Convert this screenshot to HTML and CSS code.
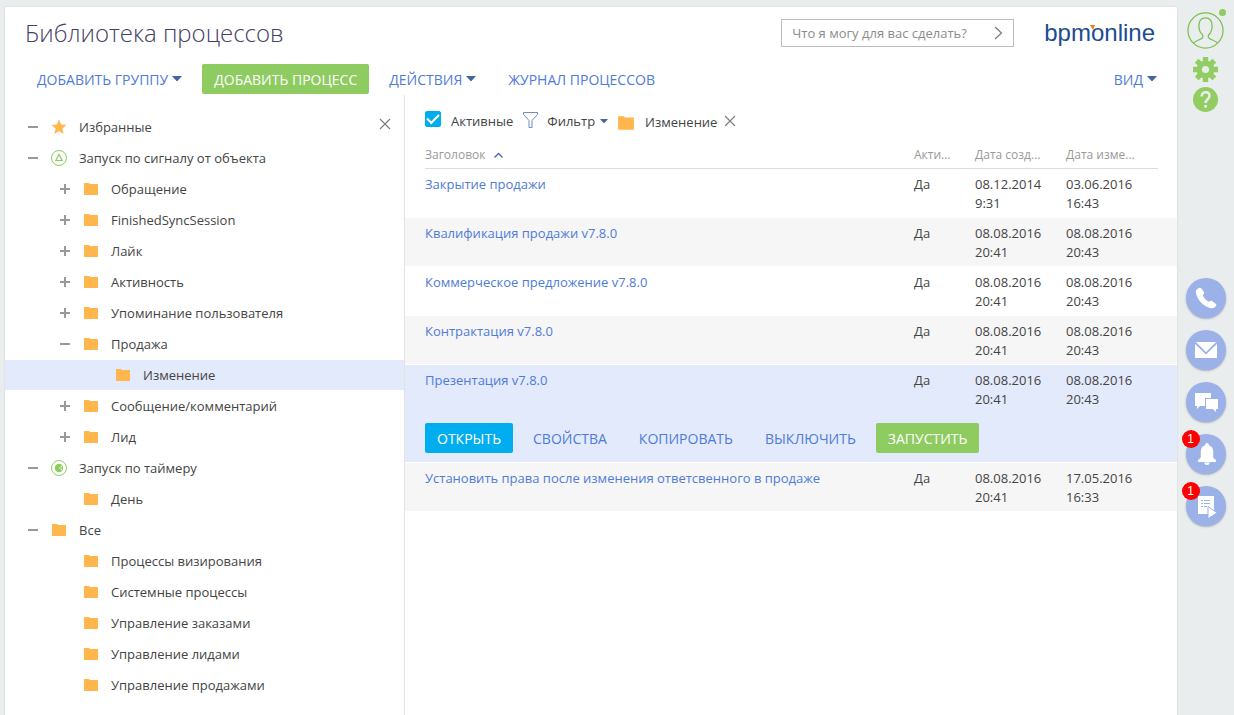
FILE: index.html
```html
<!DOCTYPE html>
<html lang="ru">
<head>
<meta charset="utf-8">
<meta name="viewport" content="width=device-width, initial-scale=1">
<title>Библиотека процессов</title>
<link rel="stylesheet" href="styles.css">
</head>
<body>
<svg class="sprite" aria-hidden="true">
  <symbol id="folder" viewBox="0 0 16 14"><path d="M1 1h5l1 1h8v11H1z" fill="#ffb64d"/></symbol>
  <symbol id="plus" viewBox="0 0 11 11"><path d="M0 5h10M5 0v10" stroke="#999" stroke-width="2" fill="none"/></symbol>
  <symbol id="minus" viewBox="0 0 11 11"><path d="M0 5h10" stroke="#999" stroke-width="2" fill="none"/></symbol>
  <symbol id="close" viewBox="0 0 12 12"><path d="M1 1l10 10M11 1L1 11" stroke="#7b7b7b" stroke-width="1.1" fill="none"/></symbol>
  <symbol id="caret" viewBox="0 0 10 6"><path d="M0 0h10L5.500 5h-1z" fill="#44659f"/></symbol>
</svg>
<div class="page">
  <main class="panel">
    <header class="header">
      <div class="header-row">
        <h1 class="title">Библиотека процессов</h1>
        <form class="search">
          <input class="search-input" type="text" placeholder="Что я могу для вас сделать?" aria-label="Что я могу для вас сделать?">
          <button class="search-go" type="button" aria-label="Найти"><svg width="9" height="14" viewBox="0 0 9 14"><path d="M1 1l6.500 6L1 13" fill="none" stroke="#7b7b7b" stroke-width="1.200"/></svg></button>
        </form>
        <a class="logo" href="#">bpmonline<svg class="logo-mark" width="5" height="5" viewBox="0 0 5 5" aria-hidden="true"><path d="M0 0h5L3.500 4h-1z" fill="#ef7f1a"/></svg></a>
      </div>
      <div class="toolbar">
        <button class="btn" type="button">ДОБАВИТЬ ГРУППУ<svg class="caret" width="10" height="6"><use href="#caret"/></svg></button>
        <button class="btn btn-green" type="button">ДОБАВИТЬ ПРОЦЕСС</button>
        <button class="btn" type="button">ДЕЙСТВИЯ<svg class="caret" width="10" height="6"><use href="#caret"/></svg></button>
        <button class="btn btn-journal" type="button">ЖУРНАЛ ПРОЦЕССОВ</button>
        <button class="btn btn-view" type="button">ВИД<svg class="caret" width="10" height="6"><use href="#caret"/></svg></button>
      </div>
    </header>
    <div class="content">
      <nav class="sidebar" aria-label="Группы">
        <button class="icon-btn sidebar-close" type="button" aria-label="Закрыть"><svg width="12" height="12"><use href="#close"/></svg></button>
        <ul class="tree">
          <li class="node"><button class="toggle" type="button" aria-label="Свернуть"><svg width="11" height="11"><use href="#minus"/></svg></button><svg class="node-icon" width="16" height="16" viewBox="0 0 16 16"><path d="M8 .5l2.100 5.100 5.400.4-4.100 3.500 1.300 5.500L8 12l-4.700 3 1.300-5.500L.5 6l5.400-.4z" fill="#ffb64d"/></svg><a href="#">Избранные</a></li>
          <li class="node"><button class="toggle" type="button" aria-label="Свернуть"><svg width="11" height="11"><use href="#minus"/></svg></button><svg class="node-icon" width="16" height="16" viewBox="0 0 16 16"><g fill="none" stroke="#8ecb60"><circle cx="8" cy="8" r="7.500"/><path d="M8 4.500l3.200 6H4.800z" stroke-width="1.200"/></g></svg><a href="#">Запуск по сигналу от объекта</a></li>
          <li class="node level-1"><button class="toggle" type="button" aria-label="Развернуть"><svg width="11" height="11"><use href="#plus"/></svg></button><svg class="node-icon" width="16" height="14"><use href="#folder"/></svg><a href="#">Обращение</a></li>
          <li class="node level-1"><button class="toggle" type="button" aria-label="Развернуть"><svg width="11" height="11"><use href="#plus"/></svg></button><svg class="node-icon" width="16" height="14"><use href="#folder"/></svg><a href="#">FinishedSyncSession</a></li>
          <li class="node level-1"><button class="toggle" type="button" aria-label="Развернуть"><svg width="11" height="11"><use href="#plus"/></svg></button><svg class="node-icon" width="16" height="14"><use href="#folder"/></svg><a href="#">Лайк</a></li>
          <li class="node level-1"><button class="toggle" type="button" aria-label="Развернуть"><svg width="11" height="11"><use href="#plus"/></svg></button><svg class="node-icon" width="16" height="14"><use href="#folder"/></svg><a href="#">Активность</a></li>
          <li class="node level-1"><button class="toggle" type="button" aria-label="Развернуть"><svg width="11" height="11"><use href="#plus"/></svg></button><svg class="node-icon" width="16" height="14"><use href="#folder"/></svg><a href="#">Упоминание пользователя</a></li>
          <li class="node level-1"><button class="toggle" type="button" aria-label="Свернуть"><svg width="11" height="11"><use href="#minus"/></svg></button><svg class="node-icon" width="16" height="14"><use href="#folder"/></svg><a href="#">Продажа</a></li>
          <li class="node level-2 is-selected"><span class="toggle"></span><svg class="node-icon" width="16" height="14"><use href="#folder"/></svg><a href="#">Изменение</a></li>
          <li class="node level-1"><button class="toggle" type="button" aria-label="Развернуть"><svg width="11" height="11"><use href="#plus"/></svg></button><svg class="node-icon" width="16" height="14"><use href="#folder"/></svg><a href="#">Сообщение/комментарий</a></li>
          <li class="node level-1"><button class="toggle" type="button" aria-label="Развернуть"><svg width="11" height="11"><use href="#plus"/></svg></button><svg class="node-icon" width="16" height="14"><use href="#folder"/></svg><a href="#">Лид</a></li>
          <li class="node"><button class="toggle" type="button" aria-label="Свернуть"><svg width="11" height="11"><use href="#minus"/></svg></button><svg class="node-icon" width="16" height="16" viewBox="0 0 16 16"><circle cx="8" cy="8" r="7.500" fill="none" stroke="#8ecb60"/><circle cx="8" cy="8" r="4.200" fill="#8ecb60"/><path d="M8 8l3-2.500v5z" fill="#fff"/><circle cx="10" cy="8" r="1" fill="#8ecb60"/></svg><a href="#">Запуск по таймеру</a></li>
          <li class="node level-1"><span class="toggle"></span><svg class="node-icon" width="16" height="14"><use href="#folder"/></svg><a href="#">День</a></li>
          <li class="node"><button class="toggle" type="button" aria-label="Свернуть"><svg width="11" height="11"><use href="#minus"/></svg></button><svg class="node-icon" width="16" height="14"><use href="#folder"/></svg><a href="#">Все</a></li>
          <li class="node level-1"><span class="toggle"></span><svg class="node-icon" width="16" height="14"><use href="#folder"/></svg><a href="#">Процессы визирования</a></li>
          <li class="node level-1"><span class="toggle"></span><svg class="node-icon" width="16" height="14"><use href="#folder"/></svg><a href="#">Системные процессы</a></li>
          <li class="node level-1"><span class="toggle"></span><svg class="node-icon" width="16" height="14"><use href="#folder"/></svg><a href="#">Управление заказами</a></li>
          <li class="node level-1"><span class="toggle"></span><svg class="node-icon" width="16" height="14"><use href="#folder"/></svg><a href="#">Управление лидами</a></li>
          <li class="node level-1"><span class="toggle"></span><svg class="node-icon" width="16" height="14"><use href="#folder"/></svg><a href="#">Управление продажами</a></li>
        </ul>
      </nav>
      <section class="grid">
        <div class="filters">
          <input class="check" type="checkbox" id="active" checked>
          <label class="check-label" for="active">Активные</label>
          <button class="filter-btn" type="button"><svg class="funnel" width="17" height="18" viewBox="0 0 17 18"><path d="M1.500 1.500h14v2l-5.500 6v7H7v-7l-5.500-6z" fill="none" stroke="#6f8cba"/></svg>Фильтр<svg class="filter-caret" width="8" height="5"><use href="#caret"/></svg></button>
          <span class="folder-filter"><svg width="18" height="16"><use href="#folder"/></svg><span>Изменение</span></span>
          <button class="icon-btn" type="button" aria-label="Убрать фильтр"><svg width="12" height="12"><use href="#close"/></svg></button>
        </div>
        <table class="table">
          <colgroup><col><col class="col-active"><col class="col-created"><col class="col-modified"></colgroup>
          <thead>
            <tr>
              <th><div class="th">Заголовок<svg class="sort" width="9" height="6" viewBox="0 0 9 6"><path d="M.5 5.500l4-4 4 4" fill="none" stroke="#3f69b8" stroke-width="1.300"/></svg></div></th>
              <th><div class="th">Акти...</div></th>
              <th><div class="th">Дата созд...</div></th>
              <th><div class="th">Дата изме...</div></th>
            </tr>
          </thead>
          <tbody>
            <tr><td><a href="#">Закрытие продажи</a></td><td>Да</td><td>08.12.2014<br>9:31</td><td>03.06.2016<br>16:43</td></tr>
            <tr class="is-odd"><td><a href="#">Квалификация продажи v7.8.0</a></td><td>Да</td><td>08.08.2016<br>20:41</td><td>08.08.2016<br>20:43</td></tr>
            <tr><td><a href="#">Коммерческое предложение v7.8.0</a></td><td>Да</td><td>08.08.2016<br>20:41</td><td>08.08.2016<br>20:43</td></tr>
            <tr class="is-odd"><td><a href="#">Контрактация v7.8.0</a></td><td>Да</td><td>08.08.2016<br>20:41</td><td>08.08.2016<br>20:43</td></tr>
            <tr class="is-active"><td><a href="#">Презентация v7.8.0</a></td><td>Да</td><td>08.08.2016<br>20:41</td><td>08.08.2016<br>20:43</td></tr>
            <tr class="row-actions"><td colspan="4"><div class="actions">
              <button class="btn btn-blue" type="button">ОТКРЫТЬ</button>
              <button class="btn" type="button">СВОЙСТВА</button>
              <button class="btn" type="button">КОПИРОВАТЬ</button>
              <button class="btn" type="button">ВЫКЛЮЧИТЬ</button>
              <button class="btn btn-green" type="button">ЗАПУСТИТЬ</button>
            </div></td></tr>
            <tr class="is-odd"><td><a href="#">Установить права после изменения ответсвенного в продаже</a></td><td>Да</td><td>08.08.2016<br>20:41</td><td>17.05.2016<br>16:33</td></tr>
          </tbody>
        </table>
      </section>
    </div>
  </main>
  <aside class="rail">
    <div class="rail-top">
      <button class="icon-btn avatar" type="button" aria-label="Профиль"><svg width="37" height="37" viewBox="0 0 38 38"><g fill="none" stroke="#7fc04e" stroke-width="1.300"><circle cx="19" cy="19" r="18"/><path d="M6.500 32c2-2.500 6.500-3.300 8.500-4.700 1.200-.8 1.500-2.800.8-4.300-2.300-1.800-3.600-5-3.600-9C12.200 9 14.500 6 19 6s6.800 3 6.800 8.500c0 4-1.300 7.200-3.600 9-.7 1.500-.4 3 .8 3.800 2 1.400 6.500 2.200 8.500 4.700"/></g></svg><span class="status"></span></button>
      <button class="icon-btn" type="button" aria-label="Настройки"><svg width="25" height="25" viewBox="0 0 25 25"><g fill="#92cd62"><circle cx="12.500" cy="12.500" r="9"/><path id="tooth" d="M9.800 5V0h5.400v5zM9.800 20v5h5.400v-5zM5 9.800H0v5.400h5zM20 9.800h5v5.400h-5z"/><use href="#tooth" transform="rotate(45 12.500 12.500)"/></g><circle cx="12.500" cy="12.500" r="3.600" fill="#e9edee"/></svg></button>
      <button class="icon-btn help" type="button" aria-label="Справка"><svg width="25" height="25" viewBox="0 0 25 25"><circle cx="12.500" cy="12.500" r="12.500" fill="#92cd62"/><path d="M8.700 9.500C8.700 6.800 10.300 5.300 12.600 5.300s3.900 1.500 3.900 3.600c0 3.200-3.900 3.500-3.900 7" fill="none" stroke="#e9edee" stroke-width="2.500"/><rect x="11.200" y="18" width="2.700" height="2.700" fill="#e9edee"/></svg></button>
    </div>
    <div class="rail-comm">
      <button class="round" type="button" aria-label="Звонки"><svg width="40" height="40" viewBox="0 0 40 40"><path d="M12 10.500c1.500-1.200 2.900-1 3.700.2l2 3.100c.8 1.200.4 2.200-.9 3.300.8 2.700 3.300 5.400 6.100 6.700 1.300-1 2.300-1.300 3.300-.6l3.200 2.200c1.200.8 1.300 2 .2 3.200-1.500 1.600-3.400 2-5.400 1.400C16.600 27.500 12 22.700 10 15.500c-.6-2-.1-3.700 2-5z" fill="#fff"/></svg></button>
      <button class="round" type="button" aria-label="Почта"><svg width="40" height="40" viewBox="0 0 40 40"><path d="M9 12h22v16H9z" fill="#fff"/><path d="M9 12.500l11 10.800 11-10.800" fill="none" stroke="#9bb1e8" stroke-width="1.800"/></svg></button>
      <button class="round" type="button" aria-label="Чат"><svg width="40" height="40" viewBox="0 0 40 40"><path d="M9 11h16v5h-6v8h-5l-3 3v-3H9z" fill="#fff"/><path d="M20 17h12v10h-2v3l-3-3h-7z" fill="#fff"/></svg></button>
      <button class="round" type="button" aria-label="Уведомления"><svg width="40" height="40" viewBox="0 0 40 40"><path d="M21 9c1.200 0 1.800.8 1.800 2.200 3 .9 4.400 3 4.400 6.300v5.300c0 1.500 1.300 2.200 2.800 3.200v2H12v-2c1.500-1 2.800-1.700 2.800-3.200v-5.300c0-3.300 1.400-5.400 4.400-6.300C19.200 9.800 19.800 9 21 9zM18.200 28.500h5.600c-.3 1.700-1.300 2.500-2.800 2.500s-2.500-.8-2.800-2.500z" fill="#fff"/></svg><span class="badge">1</span></button>
      <button class="round" type="button" aria-label="Процессы"><svg width="40" height="40" viewBox="0 0 40 40"><path d="M12 10h16v18H12z" fill="#fff"/><path d="M15 14.500h2M18 14.500h6M15 17.500h2M18 17.500h6M15 20.500h2M18 20.500h3" stroke="#9bb1e8" stroke-width="1.200"/><path d="M22 20.500l9 6.300-9 6z" fill="#fff" stroke="#9bb1e8"/></svg><span class="badge">1</span></button>
    </div>
  </aside>
</div>
</body>
</html>
```

FILE: styles.css
```css
* { box-sizing: border-box; }

body {
  margin: 0;
  background: #e9edee;
  color: #444;
  font: 13px/19px "Open Sans", "Noto Sans", sans-serif;
}

button, input { font: inherit; }
button { margin: 0; padding: 0; border: 0; background: none; cursor: pointer; }
a { color: inherit; text-decoration: none; }
svg { display: block; flex: none; }
.sprite { position: absolute; width: 0; height: 0; }

.page {
  display: flex;
  min-height: 100vh;
  padding: 7px 0 0 5px;
}

.panel {
  display: flex;
  flex: 1;
  flex-direction: column;
  min-width: 0;
  background: #fff;
  border-radius: 2px 2px 0 0;
  box-shadow: 0 0 1px 1px #e0e3e4;
}

/* Header */
.header { padding: 12px 20px 1px; }
.header-row { display: flex; align-items: center; height: 28px; padding-right: 2px; }
.title {
  flex: 1;
  margin: 0;
  color: #444064;
  font-size: 24px;
  font-weight: 300;
  line-height: 28px;
}
.search {
  display: flex;
  align-items: center;
  width: 233px;
  height: 28px;
  border: 1px solid #bdbdbd;
}
.search-input {
  flex: 1;
  min-width: 0;
  padding: 0 0 0 10px;
  border: 0;
  outline: 0;
  background: none;
}
.search-input::placeholder { color: #8c8c8c; opacity: 1; }
.search-go { padding: 0 10px; }
.logo {
  position: relative;
  margin-left: 30px;
  color: #1d4b8f;
  font: 24px/28px "Liberation Sans", Arial, sans-serif;
}
.logo-mark { position: absolute; top: 6px; left: 46px; }

.toolbar { display: flex; gap: 8px; margin-top: 17px; }
.btn {
  display: flex;
  align-items: center;
  height: 30px;
  padding: 0 12px;
  border-radius: 2px;
  color: #4f7bd9;
  font-size: 14px;
  white-space: nowrap;
}
.btn-green { background: #8ecb60; color: #fff; }
.btn-blue { background: #00aeef; color: #fff; }
.caret { margin-left: 4px; }
.btn-view { margin-left: auto; padding-right: 0; }

.content { display: flex; flex: 1; }

/* Folder tree */
.sidebar {
  position: relative;
  flex: none;
  width: 400px;
  padding-top: 17px;
  border-right: 1px solid #e3e3e3;
}
.icon-btn { display: block; }
.sidebar-close { position: absolute; top: 23px; right: 13px; }
.tree { margin: 0; padding: 0; list-style: none; }
.node {
  display: flex;
  align-items: center;
  gap: 12px;
  height: 30px;
  margin-bottom: 1px;
  padding-left: 23px;
}
.level-1 { padding-left: 55px; }
.level-2 { padding-left: 87px; }
.is-selected { background: #e3eafb; }
.toggle { flex: none; width: 11px; }

/* Process list */
.grid { flex: 1; min-width: 0; }
.filters {
  display: flex;
  align-items: center;
  height: 50px;
  padding: 2px 20px 0;
}
.check {
  appearance: none;
  display: grid;
  place-items: center;
  width: 16px;
  height: 16px;
  margin: 0 10px 4px 0;
  border: 1px solid #00aeef;
  border-radius: 2px;
}
.check:checked { background: #00aeef; }
.check:checked::before {
  content: "";
  width: 10px;
  height: 5px;
  margin-bottom: 3px;
  border: solid #fff;
  border-width: 0 0 2px 2px;
  transform: rotate(-45deg);
}
.filter-btn { display: flex; align-items: center; margin: 0 9px; color: #444; }
.funnel { margin: 0 8px 2px 0; }
.filter-caret { margin-left: 5px; }
.folder-filter { display: flex; align-items: center; gap: 10px; margin-right: 7px; padding-top: 3px; }

.table { width: 100%; border-collapse: collapse; table-layout: fixed; }
.col-active { width: 61px; }
.col-created { width: 91px; }
.col-modified { width: 111px; }
th { padding: 0; font-weight: 400; text-align: left; }
.th {
  display: flex;
  align-items: center;
  height: 24px;
  padding-bottom: 4px;
  border-bottom: 1px solid #ddd;
  color: #999;
  font-size: 12px;
}
.sort { margin-left: 9px; }
td { padding: 6px 0 5px; vertical-align: top; }
th:first-child, td:first-child { padding-left: 20px; }
th:last-child { padding-right: 19px; }
td a { color: #4f7bd9; }
.is-odd td { background: #f6f6f6; box-shadow: inset 0 -1px #fff; }
.is-active td, .row-actions td { background: #e3eafb; }
.row-actions td { padding: 9px 20px 10px; box-shadow: inset 0 -1px #fff; }
.actions { display: flex; gap: 8px; }

/* Right rail */
.rail {
  display: flex;
  flex: none;
  flex-direction: column;
  align-items: center;
  width: 57px;
}
.rail-top {
  display: flex;
  flex-direction: column;
  align-items: center;
  gap: 5px;
  padding-top: 5px;
}
.avatar { position: relative; margin-bottom: 3px; }
.status {
  position: absolute;
  top: -3px;
  right: -2px;
  width: 7px;
  height: 7px;
  border-radius: 50%;
  background: #8ecb60;
}
.rail-comm {
  display: flex;
  flex-direction: column;
  gap: 12px;
  margin-top: 166px;
}
.round {
  position: relative;
  width: 40px;
  height: 40px;
  border-radius: 50%;
  background: #9bb1e8;
  box-shadow: 0 1px 2px #a9b0b8;
}
.badge {
  position: absolute;
  top: -4px;
  left: -4px;
  width: 18px;
  height: 18px;
  border-radius: 50%;
  background: #f00;
  color: #fff;
  font: 12px/18px "Liberation Sans", Arial, sans-serif;
}
```
